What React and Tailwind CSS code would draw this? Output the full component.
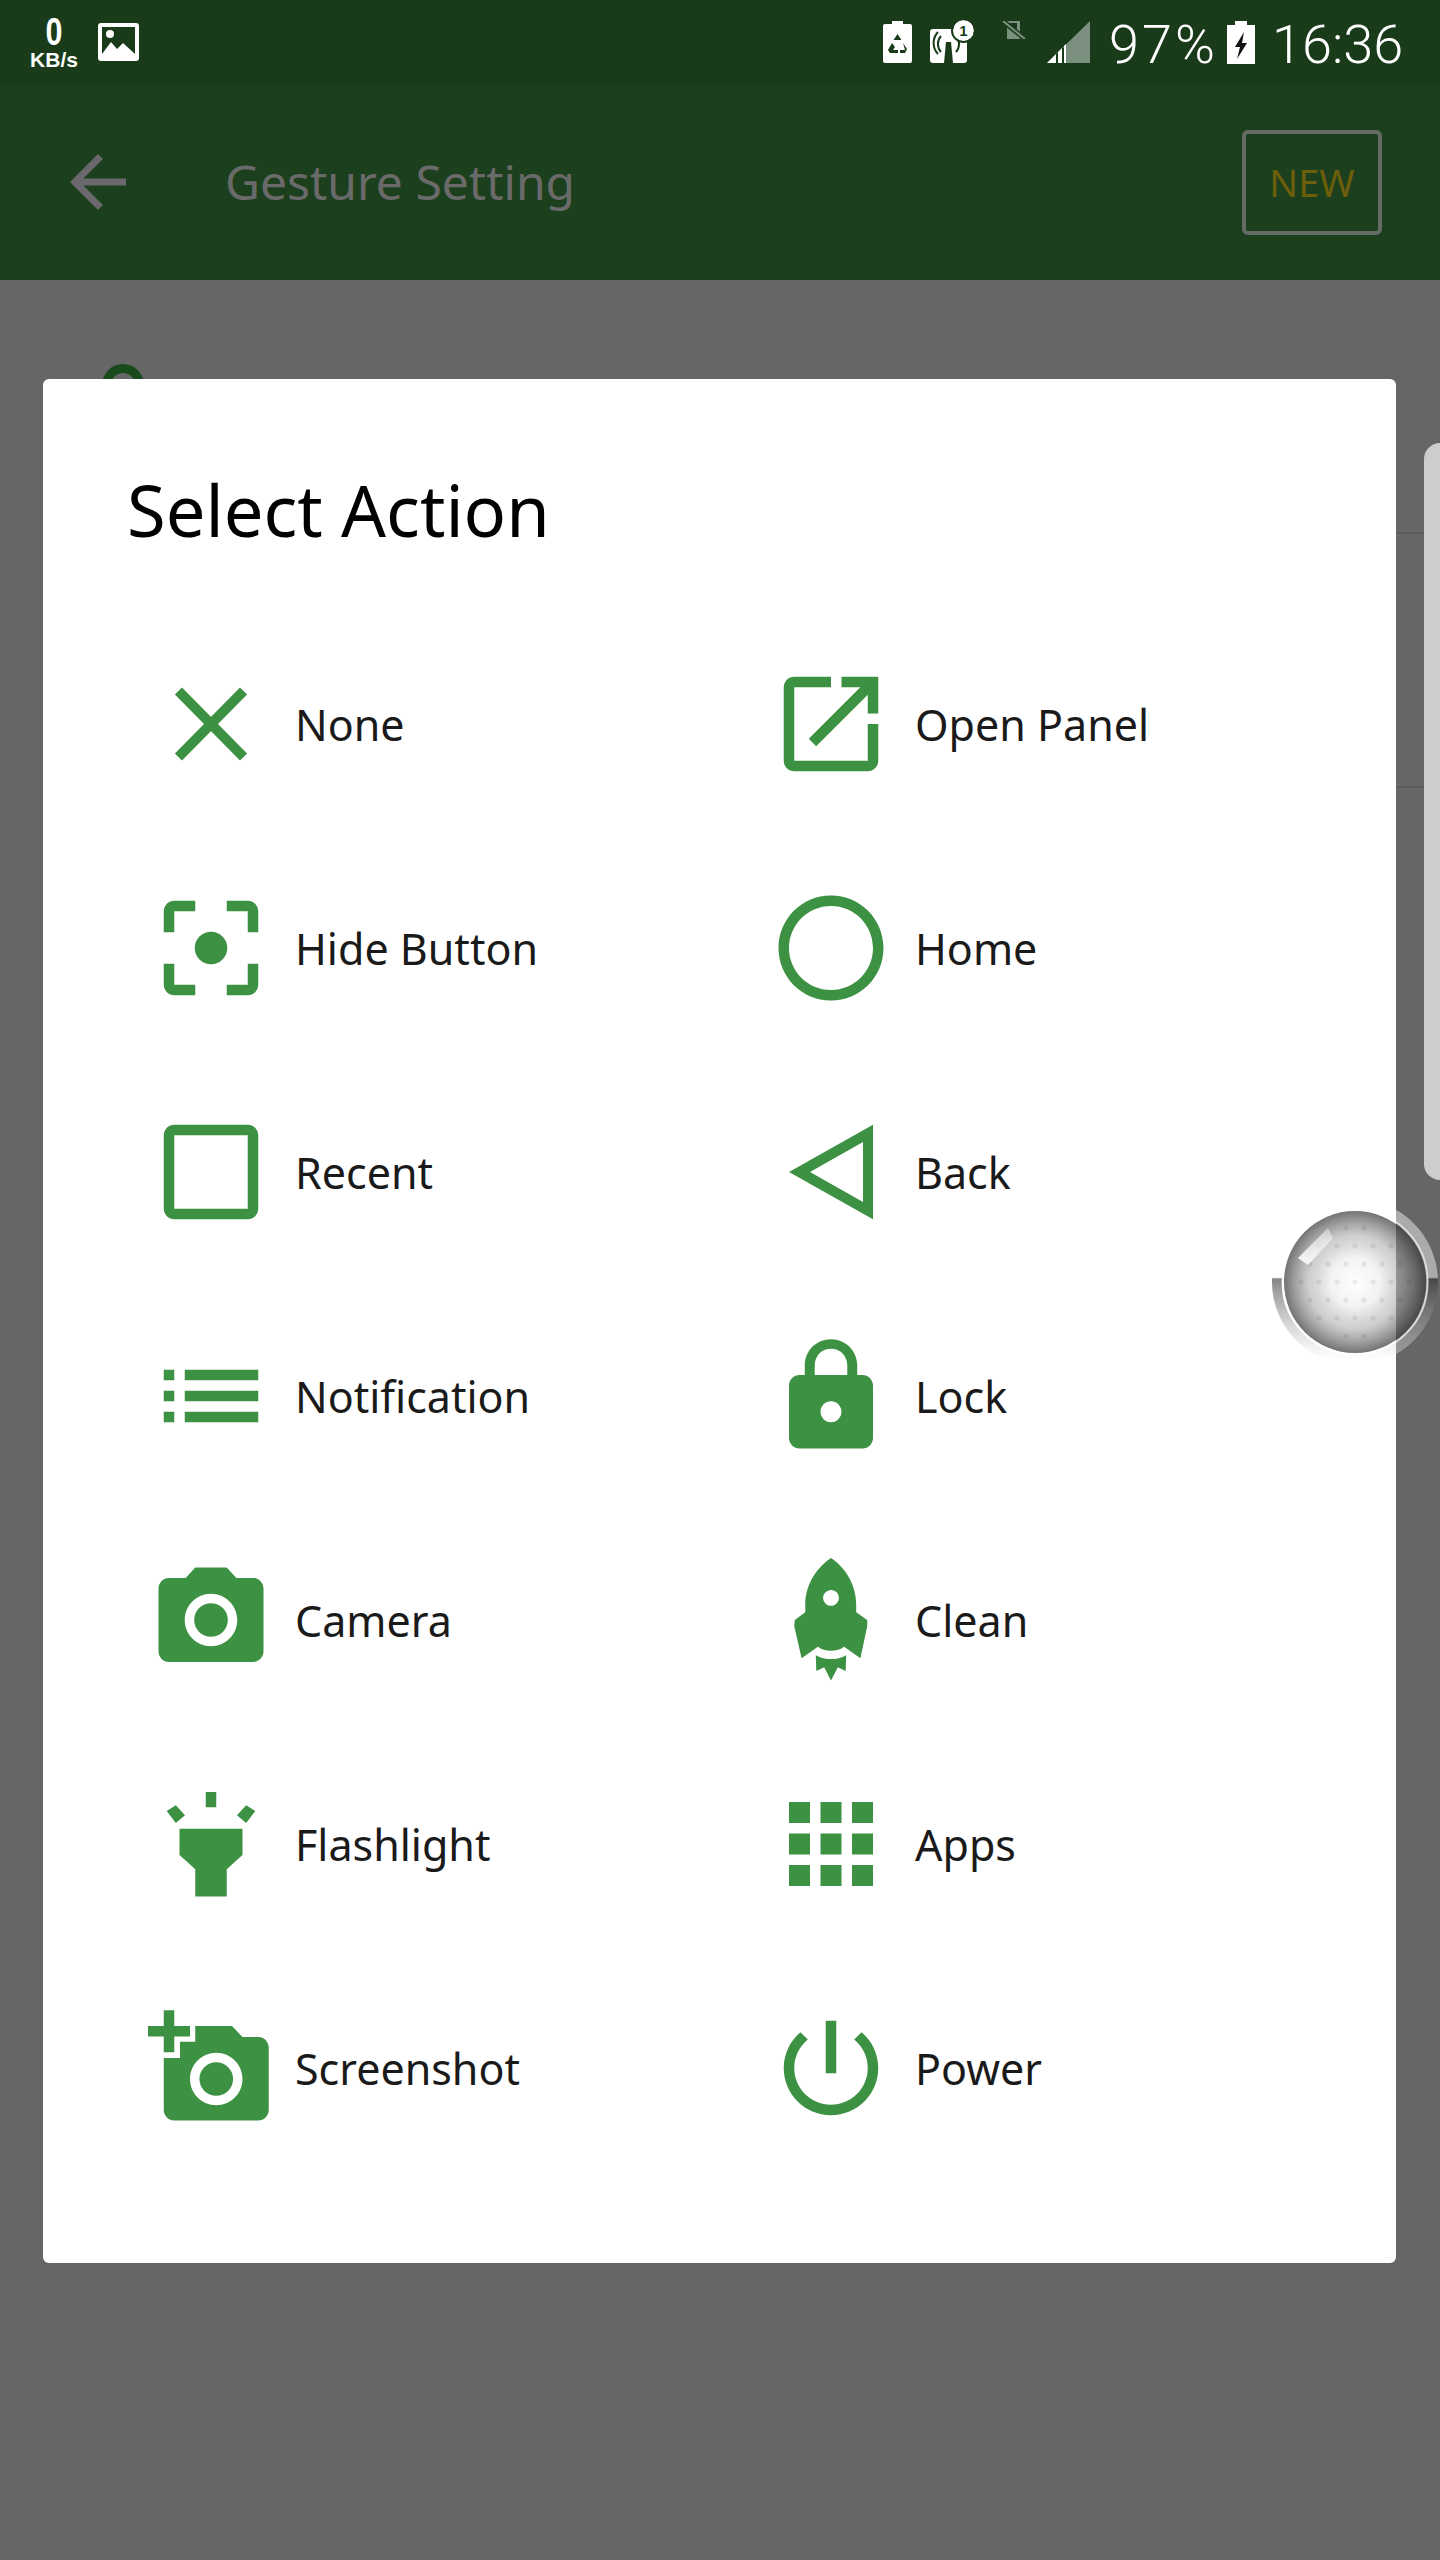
const GREEN = "#3c9143";

const ICONS = {
  none: <path d="M5.800 5.700 18.200 18.300M18.200 5.700 5.800 18.300" fill="none" stroke={GREEN} strokeWidth="1.900" />,
  openPanel: <path d="M19 19H5V5h7V3H5c-1.11 0-2 .9-2 2v14c0 1.1.89 2 2 2h14c1.1 0 2-.9 2-2v-7h-2v7zM14 3v2h3.59l-9.83 9.83 1.41 1.41L19 6.41V10h2V3h-7z" />,
  hide: (
    <>
      <circle cx="12" cy="12" r="3.100" />
      <path d="M5 15H3v4c0 1.1.9 2 2 2h4v-2H5v-4zM5 5h4V3H5c-1.1 0-2 .9-2 2v4h2V5zm14-2h-4v2h4v4h2V5c0-1.1-.9-2-2-2zm0 16h-4v2h4c1.1 0 2-.9 2-2v-4h-2v4z" />
    </>
  ),
  home: <path d="M12 2C6.47 2 2 6.47 2 12s4.47 10 10 10 10-4.47 10-10S17.53 2 12 2zm0 18c-4.41 0-8-3.59-8-8s3.59-8 8-8 8 3.59 8 8-3.59 8-8 8z" />,
  recent: <path d="M19 3H5c-1.1 0-2 .9-2 2v14c0 1.1.9 2 2 2h14c1.1 0 2-.9 2-2V5c0-1.1-.9-2-2-2zm0 16H5V5h14v14z" />,
  back: <path fillRule="evenodd" d="M20 3v18L4 12zM18.1 6.3 8 12l10.1 5.7z" />,
  notification: <path d="M3 13h2v-2H3v2zm0 4h2v-2H3v2zm0-8h2V7H3v2zm4 4h14v-2H7v2zm0 4h14v-2H7v2zM7 7v2h14V7H7z" />,
  lock: <path d="M18 8h-1V6.200C17 3.400 14.800 1.200 12 1.200S7 3.400 7 6.200V8H6c-1.100 0-2 .9-2 2v10c0 1.100.9 2 2 2h12c1.100 0 2-.9 2-2V10c0-1.100-.9-2-2-2zm-6 9c-1.100 0-2-.9-2-2s.9-2 2-2 2 .9 2 2-.9 2-2 2zm3.100-9H8.900V6.200C8.900 4.400 10.200 3 12 3s3.100 1.400 3.100 3.200V8z" />,
  camera: (
    <>
      <path d="M9 2 7.17 4H4c-1.1 0-2 .9-2 2v12c0 1.1.9 2 2 2h16c1.1 0 2-.9 2-2V6c0-1.1-.9-2-2-2h-3.17L15 2H9zm3 15c-2.76 0-5-2.240-5-5s2.240-5 5-5 5 2.240 5 5-2.240 5-5 5z" />
      <circle cx="12" cy="12" r="3.2" />
    </>
  ),
  clean: (
    <>
      <path
        fillRule="evenodd"
        d="M12 .2C9 2.200 7.100 5.600 7.100 9v1.500L5.100 12l-.100 1.200 1.400 6.100 3.100-2.200c1.200 1 3.800 1 5 0l3.100 2.200 1.300-6.100V12l-2.100-1.500V9C16.800 5.600 15 2.200 12 .2zm0 6.100c.9 0 1.500.7 1.500 1.500s-.7 1.500-1.500 1.500-1.500-.7-1.500-1.500.7-1.500 1.500-1.500z"
      />
      <path d="M9.100 18.700c1.800 1 4 1 5.800 0l-.1 3-1.500-.7-1.300 2.500-1.300-2.500-1.500.7z" />
    </>
  ),
  flashlight: <path d="M11 2.100h2V5h-2zM3.560 5.700 5.300 4.600l1.750 1.900L5.300 8zM20.440 5.700 18.700 4.600l-1.750 1.900L18.700 8zM6 9.100h12v5l-3 2.700V22H9v-5.200l-3-2.700z" />,
  apps: <path d="M4 8h4V4H4v4zm6 12h4v-4h-4v4zm-6 0h4v-4H4v4zm0-6h4v-4H4v4zm6 0h4v-4h-4v4zm6-10v4h4V4h-4zm-6 4h4V4h-4v4zm6 6h4v-4h-4v4zm0 6h4v-4h-4v4z" />,
  screenshot: (
    <>
      <path d="M9 4h7l2 2.100h3c1.100 0 2 .9 2 2V20c0 1.100-.9 2-2 2H5c-1.100 0-2-.9-2-2V10.100h3.100V7H9zm4 15.100c2.760 0 5-2.240 5-5s-2.240-5-5-5-5 2.240-5 5 2.240 5 5 5z" />
      <circle cx="13" cy="14.100" r="3.200" />
      <path d="M3 1h2v3h3v2H5v3H3V6H0V4h3z" />
    </>
  ),
  power: <path d="M13 3h-2v10h2V3zm4.830 2.170-1.420 1.420C17.990 7.860 19 9.810 19 12c0 3.870-3.130 7-7 7s-7-3.130-7-7c0-2.190 1.010-4.140 2.580-5.420L6.170 5.170C4.230 6.820 3 9.260 3 12c0 4.970 4.030 9 9 9s9-4.030 9-9c0-2.740-1.230-5.180-3.170-6.830z" />,
};

const ACTIONS = [
  ["None", "none"],
  ["Open Panel", "openPanel"],
  ["Hide Button", "hide"],
  ["Home", "home"],
  ["Recent", "recent"],
  ["Back", "back"],
  ["Notification", "notification"],
  ["Lock", "lock"],
  ["Camera", "camera"],
  ["Clean", "clean"],
  ["Flashlight", "flashlight"],
  ["Apps", "apps"],
  ["Screenshot", "screenshot"],
  ["Power", "power"],
];

function ActionIcon({ name }) {
  return (
    <svg viewBox="0 0 24 24" fill={GREEN} className="h-[126px] w-[126px] shrink-0 overflow-visible">
      {ICONS[name]}
    </svg>
  );
}

function StatusBar() {
  return (
    <div className="flex h-[84px] items-center bg-[#1a3b1a] text-white">
      <div className="ml-[29px] flex w-[50px] flex-col items-center font-['Liberation_Sans',sans-serif]">
        <span className="text-[39px] leading-[32px] font-bold [transform:scaleX(.78)]">0</span>
        <span className="mt-[2px] text-[21px] leading-[19px] font-bold whitespace-nowrap">KB/s</span>
      </div>
      {/* picture notification */}
      <svg viewBox="0 0 41 38" className="ml-[19px] h-[38px] w-[41px]">
        <rect width="41" height="38" rx="3" fill="#fff" />
        <rect x="4" y="4" width="33" height="27" fill="#1a3b1a" />
        <circle cx="12" cy="11" r="4" fill="#fff" />
        <path d="M4 31l9-12 6 7 6-6 12 11z" fill="#fff" />
      </svg>

      {/* recycle battery */}
      <svg viewBox="0 0 29 42" className="ml-[744px] h-[42px] w-[29px]">
        <path d="M9 0h11v3h7a2 2 0 0 1 2 2v35a2 2 0 0 1-2 2H2a2 2 0 0 1-2-2V5a2 2 0 0 1 2-2h7z" fill="#fff" />
        <path d="M14.500 13l4 6h-8zM9 22l3 4-2 3h5v3H7l-2-3zM20 22l4 6-2 4h-5v-3h5z" fill="#1a3b1a" />
      </svg>
      {/* hotspot with badge */}
      <div className="relative ml-[18px] h-[41px] w-[37px]">
        <svg viewBox="0 0 37 41" className="h-full w-full">
          <rect y="7" width="37" height="34" rx="3" fill="#fff" />
          <path d="M16 20h5l2 21h-9z" fill="#1a3b1a" />
          <path d="M11 14a12 12 0 0 0 0 16M26 14a12 12 0 0 1 0 16M8 10a16 16 0 0 0 0 22" fill="none" stroke="#1a3b1a" strokeWidth="2" />
        </svg>
        <span className="absolute top-[-2px] right-[-7px] flex h-[21px] w-[21px] items-center justify-center rounded-full bg-white text-[15px] leading-none font-bold text-[#1a3b1a] outline outline-2 outline-[#1a3b1a] font-['Liberation_Sans',sans-serif]">
          1
        </span>
      </div>
      {/* no sim */}
      <svg viewBox="0 0 24 18" className="mb-[24px] ml-[35px] h-[18px] w-[24px]">
        <path d="M5 0h13v18H5z" fill="#7c9080" />
        <path d="M8 2h7v6H8z" fill="#1a3b1a" />
        <path d="M1 0l22 18" stroke="#1a3b1a" strokeWidth="5" />
        <path d="M1 0l22 18" stroke="#7c9080" strokeWidth="2" />
      </svg>
      {/* signal */}
      <svg viewBox="0 0 43 42" className="ml-[21px] h-[42px] w-[43px]">
        <path d="M43 0v42H0z" fill="#7c9080" />
        <path d="M0 42l15-15v15zM17 25l2-2v19h-2z" fill="#fff" />
        <path d="M9 42l0-9 2-2v11zM15 27h2v15h-2z" fill="#1a3b1a" />
      </svg>
      <span className="mt-[6px] ml-[19px] w-[107px] text-[54px] leading-none tracking-[3px] whitespace-nowrap font-['Roboto',sans-serif] font-light">
        97%
      </span>
      {/* charging battery */}
      <svg viewBox="0 0 28 43" className="ml-[11px] h-[43px] w-[28px]">
        <path d="M8 0h12v4h8v39H0V4h8z" fill="#fff" />
        <path d="M17 11 8 26h5l-3 12 10-16h-5z" fill="#111" />
      </svg>
      <span className="mt-[6px] ml-[17px] text-[54px] leading-none font-['Roboto',sans-serif] font-light">16:36</span>
    </div>
  );
}

function AppBar() {
  return (
    <div className="flex h-[196px] items-center bg-[#1c401d]">
      <svg viewBox="0 0 24 24" fill="#6b686e" className="ml-[56px] h-[84px] w-[84px]">
        <path d="M20 11H7.830l5.590-5.590L12 4l-8 8 8 8 1.410-1.410L7.830 13H20z" />
      </svg>
      <span className="ml-[85px] text-[48px] leading-none text-[#6a6a6a]">Gesture Setting</span>
      <div className="mr-[58px] ml-auto flex h-[105px] w-[140px] items-center justify-center rounded-[6px] border-[4px] border-[#666b66] text-[38px] text-[#6c5e0a]">
        NEW
      </div>
    </div>
  );
}

// floating assistive ball, semi-transparent over the page
function Ball() {
  const dots = [];
  for (let row = -3; row <= 3; row++) {
    for (let col = -3; col <= 3; col++) {
      const x = 85 + col * 18 + (row % 2 ? 9 : 0);
      const y = 85 + row * 18;
      if (Math.hypot(x - 85, y - 85) < 58) {
        dots.push(<circle key={`${row}-${col}`} cx={x} cy={y} r="2.600" fill="#000" opacity=".07" />);
      }
    }
  }
  return (
    <svg viewBox="0 0 170 170" className="absolute top-[1197px] left-[1270px] z-20 h-[170px] w-[170px]">
      <defs>
        <radialGradient id="sphere" cx="50%" cy="50%" r="50%">
          <stop offset="0%" stopColor="#fff" stopOpacity=".92" />
          <stop offset="35%" stopColor="#eee" stopOpacity=".72" />
          <stop offset="65%" stopColor="#a8a8a8" stopOpacity=".55" />
          <stop offset="100%" stopColor="#3c3c3c" stopOpacity=".72" />
        </radialGradient>
        <linearGradient id="ring" x1="0" y1="0" x2="0" y2="1">
          <stop offset="0%" stopColor="#fff" stopOpacity=".45" />
          <stop offset="47%" stopColor="#fff" stopOpacity=".45" />
          <stop offset="48%" stopColor="#333" stopOpacity=".6" />
          <stop offset="100%" stopColor="#fff" stopOpacity=".35" />
        </linearGradient>
        <linearGradient id="gloss" x1="0" y1="1" x2="1" y2="0">
          <stop offset="0%" stopColor="#fff" stopOpacity=".95" />
          <stop offset="100%" stopColor="#fff" stopOpacity=".35" />
        </linearGradient>
      </defs>
      <circle cx="85" cy="85" r="78" fill="none" stroke="url(#ring)" strokeWidth="10" />
      <circle cx="85" cy="85" r="72.500" fill="none" stroke="#fff" strokeOpacity=".75" strokeWidth="2" />
      <circle cx="85" cy="85" r="71" fill="url(#sphere)" />
      {dots}
      <path d="M28 61 58 31l5 10-25 27z" fill="url(#gloss)" />
    </svg>
  );
}

export default function App() {
  return (
    <div className="relative h-[2560px] w-[1440px] overflow-hidden bg-[#666666] font-['Noto_Sans',sans-serif]">
      <StatusBar />
      <AppBar />

      {/* page behind the dialog */}
      <div className="absolute top-[364px] left-[102px] flex h-[42px] w-[42px] items-center justify-center rounded-full bg-[#184a1c]">
        <div className="h-[24px] w-[24px] rounded-full bg-[#666666]" />
      </div>
      <div className="absolute top-[532px] left-[1396px] h-[2px] w-[28px] bg-[#5c5c5c]" />
      <div className="absolute top-[786px] left-[1396px] h-[2px] w-[28px] bg-[#5c5c5c]" />
      <div className="absolute top-[443px] left-[1424px] h-[737px] w-[40px] rounded-l-[16px] bg-[#cdcdcd]" />

      <div className="relative z-10 mt-[99px] ml-[43px] h-[1884px] w-[1353px] rounded-[6px] bg-white">
        <div className="flex h-[233px] items-center pt-[30px] pl-[84px] text-[70.500px] leading-none text-black">
          Select Action
        </div>
        <div className="grid grid-cols-[620px_1fr] pl-[105px]">
          {ACTIONS.map(([label, icon]) => (
            <div key={label} className="flex h-[224px] items-center">
              <ActionIcon name={icon} />
              <span className="ml-[21px] text-[43px] leading-none text-[#1a1a1a]">{label}</span>
            </div>
          ))}
        </div>
      </div>

      <Ball />
    </div>
  );
}
